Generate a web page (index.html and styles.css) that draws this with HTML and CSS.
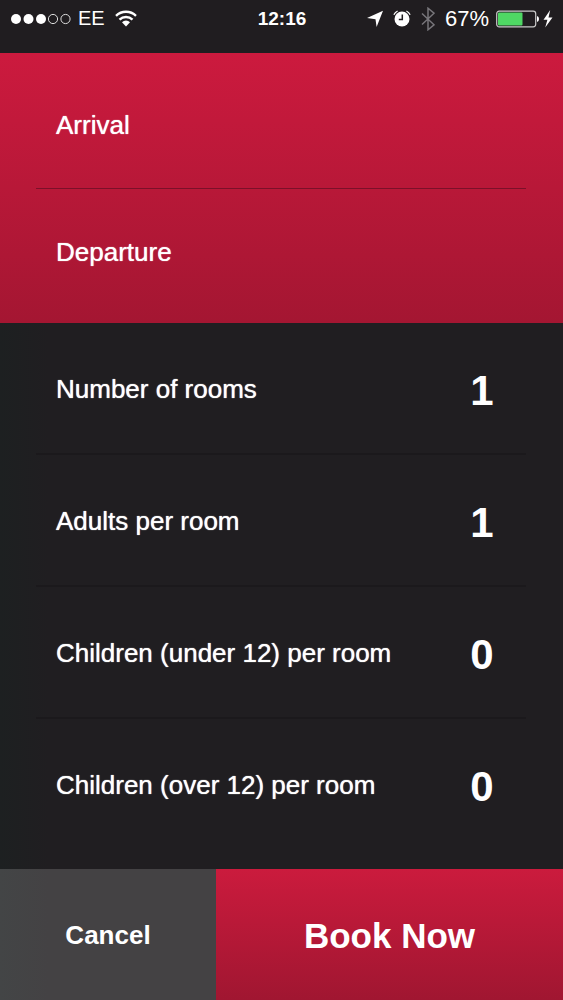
FILE: index.html
```html
<!DOCTYPE html>
<html lang="en">
<head>
    <meta charset="UTF-8">
    <meta name="viewport" content="width=device-width, initial-scale=1.0">
    <title>Book a room</title>
    <link rel="stylesheet" href="styles.css">
</head>
<body>
    <header class="status-bar">
        <div class="status-left">
            <svg class="icon" width="60" height="12" viewBox="0 0 60 12">
                <g fill="#fff">
                    <circle cx="5" cy="6" r="5"/>
                    <circle cx="17.500" cy="6" r="5"/>
                    <circle cx="30" cy="6" r="5"/>
                </g>
                <g fill="none" stroke="#ddd" stroke-width="1">
                    <circle cx="42" cy="6" r="4.600"/>
                    <circle cx="54.500" cy="6" r="4.600"/>
                </g>
            </svg>
            <span class="carrier">EE</span>
            <svg class="icon" width="22" height="17" viewBox="0 0 22 17">
                <g fill="none" stroke="#fff" stroke-width="2.400">
                    <path d="M1 5.800a14.500 14.500 0 0 1 20 0"/>
                    <path d="M4.500 9.600a9.400 9.400 0 0 1 13 0"/>
                </g>
                <path fill="#fff" d="M7 12.200a5.800 5.800 0 0 1 8 0l-4 4.200z"/>
            </svg>
        </div>
        <span class="clock">12:16</span>
        <div class="status-right">
            <svg class="icon" width="16" height="17" viewBox="0 0 16 17">
                <path fill="#fff" d="M16 .8L9.600 17 8.500 9.200 0 8z"/>
            </svg>
            <svg class="icon" width="18" height="18" viewBox="0 0 18 18">
                <circle cx="9" cy="9" r="7.500" fill="#fff"/>
                <path d="M9.300 4.500v5H5.800" fill="none" stroke="#201d20" stroke-width="1.500"/>
                <path d="M.9 4.800a7 7 0 0 1 3.700-3.800M17.100 4.800a7 7 0 0 0-3.700-3.800" fill="none" stroke="#fff" stroke-width="1.300"/>
            </svg>
            <svg class="icon" width="14" height="24" viewBox="0 0 14 24">
                <path d="M1 6.500l12 11.300-6 5V1.200l6 5L1 17.500" fill="none" stroke="#77757a" stroke-width="1.500"/>
            </svg>
            <span class="percent">67%</span>
            <svg class="icon" width="57" height="18" viewBox="0 0 57 18">
                <rect x=".7" y="1.200" width="39" height="15.600" rx="2.500" fill="none" stroke="#c9c9c9" stroke-width="1.200"/>
                <rect x="2" y="2.600" width="24.500" height="12.800" rx="1" fill="#4fd864"/>
                <path fill="#fff" d="M41 6q2 .5 2 3t-2 3z"/>
                <path fill="#fff" d="M54.200 0L47.500 9.800h3.900L49.200 17.500 56.500 7.500h-4z"/>
            </svg>
        </div>
    </header>

    <form class="booking">
        <section class="dates">
            <button type="button" class="row date-row">Arrival</button>
            <button type="button" class="row date-row">Departure</button>
        </section>

        <section class="guests">
            <div class="row">
                <label for="rooms">Number of rooms</label>
                <input type="text" inputmode="numeric" id="rooms" value="1">
            </div>
            <div class="row">
                <label for="adults">Adults per room</label>
                <input type="text" inputmode="numeric" id="adults" value="1">
            </div>
            <div class="row">
                <label for="children-under">Children (under 12) per room</label>
                <input type="text" inputmode="numeric" id="children-under" value="0">
            </div>
            <div class="row">
                <label for="children-over">Children (over 12) per room</label>
                <input type="text" inputmode="numeric" id="children-over" value="0">
            </div>
        </section>

        <div class="actions">
            <button type="button" class="cancel">Cancel</button>
            <button type="submit" class="book">Book Now</button>
        </div>
    </form>
</body>
</html>
```
FILE: styles.css
```css
* {
    box-sizing: border-box;
}
body {
    margin: 0;
    min-height: 100vh;
    display: flex;
    flex-direction: column;
    background: linear-gradient(to right, #1d2021, #201e21 48px);
    color: #fff;
    font-family: "Liberation Sans", Arial, sans-serif;
    font-size: 26px;
}
button, input {
    font-family: inherit;
    color: inherit;
    border: none;
    border-radius: 0;
    margin: 0;
    padding: 0;
}
button {
    cursor: pointer;
}

/* Status bar */
.status-bar {
    display: grid;
    grid-template-columns: 1fr auto 1fr;
    align-items: center;
    height: 53px;
    padding: 0 10px 16px 11px;
    background-color: #201d20;
    font-size: 20px;
}
.status-left, .status-right {
    display: flex;
    align-items: center;
}
.status-right {
    justify-content: flex-end;
    gap: 10px;
}
.icon {
    display: block;
    flex: none;
}
.carrier {
    margin: 0 10px 0 7px;
}
.clock {
    font-weight: bold;
    font-size: 19px;
}
.percent {
    font-size: 22px;
    margin-right: -3px;
}

/* Form */
.booking {
    flex: 1;
    display: flex;
    flex-direction: column;
}
.row {
    display: flex;
    align-items: center;
    justify-content: space-between;
    width: 100%;
    height: 132px;
    padding: 3px 20px 0;
    border-bottom: 2px solid #1b191c;
}
.row:last-child {
    border-bottom-color: transparent;
}
.dates {
    padding: 9px 37px 7px 36px;
    background: linear-gradient(#cc1a3e, #a41632);
}
.date-row {
    height: 127px;
    padding: 0 20px;
    background: none;
    border-bottom: 1px solid #7c1029;
    font-size: 26px;
    text-align: left;
}
.guests {
    flex: 1;
    padding: 0 37px 16px 36px;
}
.date-row, label {
    text-shadow: 0 0 1px #fff;
}
.guests input {
    width: 48px;
    padding-top: 2px;
    background: none;
    font-size: 42px;
    font-weight: bold;
    text-align: center;
}

/* Bottom buttons */
.actions {
    display: flex;
    height: 131px;
}
.cancel, .book {
    padding-top: 2px;
    font-weight: bold;
}
.cancel {
    flex: 216;
    background: linear-gradient(to right, #434546, #444244 48px);
    font-size: 26px;
}
.book {
    flex: 347;
    background: linear-gradient(#cb1b3d, #a01631);
    font-size: 35px;
}
```
